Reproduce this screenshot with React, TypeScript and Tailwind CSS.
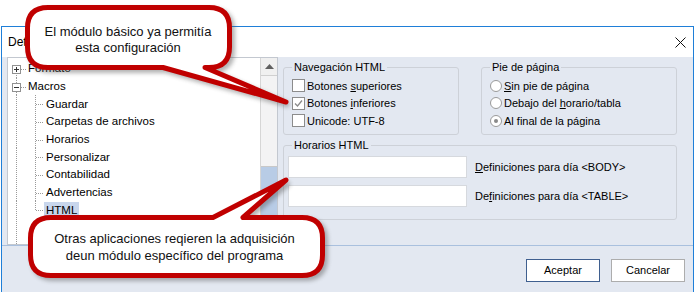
import React from 'react';

function RootRow({ label, open, first }: { label: string; open?: boolean; first?: boolean }) {
    return (
        <div className="flex items-center h-[17.7px]">
            <svg width="20" height="18" className="shrink-0 block">
                <line x1="8.5" y1={first ? 9 : 0} x2="8.5" y2="18" stroke="#9a9a9a" strokeDasharray="1 1" />
                <line x1="13" y1="9.5" x2="19" y2="9.5" stroke="#9a9a9a" strokeDasharray="1 1" />
                <rect x="4.5" y="5.5" width="8" height="8" fill="white" stroke="#919191" />
                <line x1="6" y1="9.5" x2="11" y2="9.5" stroke="#333" />
                {!open && <line x1="8.5" y1="7" x2="8.5" y2="12" stroke="#333" />}
            </svg>
            <span>{label}</span>
        </div>
    );
}

function ChildRow({ label, last, selected }: { label: string; last?: boolean; selected?: boolean }) {
    return (
        <div className="flex items-center h-[17.7px]">
            <svg width="36" height="18" className="shrink-0 block">
                <line x1="8.5" y1="0" x2="8.5" y2="18" stroke="#9a9a9a" strokeDasharray="1 1" />
                <line x1="27.5" y1="0" x2="27.5" y2={last ? 9 : 18} stroke="#9a9a9a" strokeDasharray="1 1" />
                <line x1="28" y1="9.5" x2="36" y2="9.5" stroke="#9a9a9a" strokeDasharray="1 1" />
            </svg>
            <span className={selected ? 'px-[2px] bg-[#c8d6ec] leading-[17px]' : 'px-[2px]'}>{label}</span>
        </div>
    );
}

function Check({ checked, children }: { checked?: boolean; children: React.ReactNode }) {
    return (
        <div className="flex items-center h-[17.5px] gap-[2px]">
            <span className="w-[13px] h-[13px] border border-[#8c8c8c] bg-white flex items-center justify-center shrink-0">
                {checked && (
                    <svg width="9" height="9" viewBox="0 0 9 9">
                        <path d="M1 4.5 L3.5 7 L8 1.5" fill="none" stroke="#8a8a8a" strokeWidth="1.3" />
                    </svg>
                )}
            </span>
            <span>{children}</span>
        </div>
    );
}

function Radio({ checked, children }: { checked?: boolean; children: React.ReactNode }) {
    return (
        <div className="flex items-center h-[17.5px] gap-[2px]">
            <span className="w-[12px] h-[12px] rounded-full border border-[#9a9a9a] bg-white flex items-center justify-center shrink-0">
                {checked && <span className="w-[4px] h-[4px] rounded-full bg-[#8a8a8a]" />}
            </span>
            <span>{children}</span>
        </div>
    );
}

function Callouts() {
    const c1 =
        'M48,7.5 H209 Q229.5,7.5 229.5,28 V47 Q229.5,67.5 209,67.5 H205 L286,102 L163,67.5 H48 Q27.5,67.5 27.5,47 V28 Q27.5,7.5 48,7.5 Z';
    const c2 =
        'M51,217.5 H213 L286,180 L243,217.5 H302 Q322.5,217.5 322.5,238 V255 Q322.5,275.5 302,275.5 H51 Q30.5,275.5 30.5,255 V238 Q30.5,217.5 51,217.5 Z';
    return (
        <svg width="696" height="292" className="absolute left-0 top-0 pointer-events-none">
            <defs>
                <filter id="sh" x="-20%" y="-20%" width="140%" height="160%">
                    <feGaussianBlur stdDeviation="2" />
                </filter>
            </defs>
            <g transform="translate(3,3)" opacity="0.45" filter="url(#sh)">
                <path d={c1} fill="#555" stroke="#555" strokeWidth="5" />
                <path d={c2} fill="#555" stroke="#555" strokeWidth="5" />
            </g>
            <path d={c1} fill="white" stroke="#c00000" strokeWidth="5" strokeLinejoin="round" />
            <path d={c2} fill="white" stroke="#c00000" strokeWidth="5" strokeLinejoin="round" />
        </svg>
    );
}

export default function App() {
    return (
        <div className="relative w-[696px] h-[292px] overflow-hidden bg-white font-['Liberation_Sans',Arial,sans-serif] text-[12px] text-black">
            <div className="h-[26px]" />
            <div className="ml-[1px] w-[693px] h-[266px] border-x border-t border-[#1f7fd8] flex flex-col">
                <div className="h-[30px] shrink-0 flex items-center justify-between pl-[6px] pr-[7px] bg-white">
                    <span>Detalles</span>
                    <svg width="11" height="11" viewBox="0 0 11 11">
                        <path d="M0.5 0.5 L10.5 10.5 M10.5 0.5 L0.5 10.5" stroke="#111" strokeWidth="1" />
                    </svg>
                </div>
                <div className="h-[188px] shrink-0 bg-[#e3e8f1] flex pl-[5px]">
                    {/* tree */}
                    <div className="w-[271px] h-full border border-[#c3c8d0] bg-white flex text-[11.5px]">
                        <div className="flex-1 flex flex-col pt-[2px] overflow-hidden">
                            <RootRow label="Formato" first />
                            <RootRow label="Macros" open />
                            <ChildRow label="Guardar" />
                            <ChildRow label="Carpetas de archivos" />
                            <ChildRow label="Horarios" />
                            <ChildRow label="Personalizar" />
                            <ChildRow label="Contabilidad" />
                            <ChildRow label="Advertencias" />
                            <ChildRow label="HTML" last selected />
                            <div className="flex-1 ml-[8px] border-l border-dotted border-[#9a9a9a]" />
                        </div>
                        <div className="w-[17px] flex flex-col border-l border-[#d6d6d6]">
                            <div className="h-[18px] bg-[#f0f0f0] border-b border-[#d0d0d0] flex items-center justify-center">
                                <svg width="9" height="5" viewBox="0 0 9 5">
                                    <path d="M0 5 L4.5 0 L9 5 Z" fill="#606060" />
                                </svg>
                            </div>
                            <div className="h-[91px] bg-[#f3f3f4] border-b border-[#c8c8c8]" />
                            <div className="flex-1 bg-[#b8cce6]" />
                        </div>
                    </div>
                    {/* groups */}
                    <div className="ml-[5px] w-[394px] flex flex-col pt-[3px] text-[11px]">
                        <div className="flex gap-[22px]">
                            <fieldset className="w-[176px] h-[75px] border border-[#cdd1d8] rounded-[3px] pl-[8px] pt-[3px]">
                                <legend className="px-[2px] leading-[14px]">Navegación HTML</legend>
                                <Check>
                                    Botones <u>s</u>uperiores
                                </Check>
                                <Check checked>
                                    Botones <u>i</u>nferiores
                                </Check>
                                <Check>Unicode: UTF-8</Check>
                            </fieldset>
                            <fieldset className="w-[196px] h-[75px] border border-[#cdd1d8] rounded-[3px] pl-[8px] pt-[3px]">
                                <legend className="px-[2px] leading-[14px]">Pie de página</legend>
                                <Radio>
                                    <u>S</u>in pie de página
                                </Radio>
                                <Radio>
                                    Debajo del <u>h</u>orario/tabla
                                </Radio>
                                <Radio checked>Al final de la página</Radio>
                            </fieldset>
                        </div>
                        <fieldset className="mt-[3px] w-[394px] h-[82px] border border-[#cdd1d8] rounded-[3px] pl-[4px] pt-[4px]">
                            <legend className="ml-[4px] px-[2px] leading-[14px]">Horarios HTML</legend>
                            <div className="flex flex-col gap-[7px]">
                                <div className="flex items-center">
                                    <div className="w-[179px] h-[22px] bg-white border border-[#d6d9de]" />
                                    <span className="ml-[8px]">
                                        <u>D</u>efiniciones para día &lt;BODY&gt;
                                    </span>
                                </div>
                                <div className="flex items-center">
                                    <div className="w-[179px] h-[22px] bg-white border border-[#d6d9de]" />
                                    <span className="ml-[8px]">
                                        De<u>f</u>iniciones para día &lt;TABLE&gt;
                                    </span>
                                </div>
                            </div>
                        </fieldset>
                    </div>
                </div>
                <div className="flex-1 bg-[#e3e8f1] border-t border-[#a9c0de] flex justify-end items-start pt-[13px] pr-[8px] gap-[11px]">
                    <button className="w-[74px] h-[23px] bg-white border border-[#3f5f8f] text-[11px]">Aceptar</button>
                    <button className="w-[74px] h-[23px] bg-white border border-[#adadad] text-[11px]">Cancelar</button>
                </div>
            </div>

            <Callouts />
            <div className="absolute left-[27px] top-[24px] w-[202px] flex flex-col items-center text-[13px] leading-[16px] text-[#111]">
                <span>El módulo básico ya permitía</span>
                <span>esta configuración</span>
            </div>
            <div className="absolute left-[26px] top-[230px] w-[297px] flex flex-col items-center text-[13px] leading-[17px] text-[#111]">
                <span>Otras aplicaciones reqieren la adquisición</span>
                <span>deun módulo específico del programa</span>
            </div>
        </div>
    );
}
